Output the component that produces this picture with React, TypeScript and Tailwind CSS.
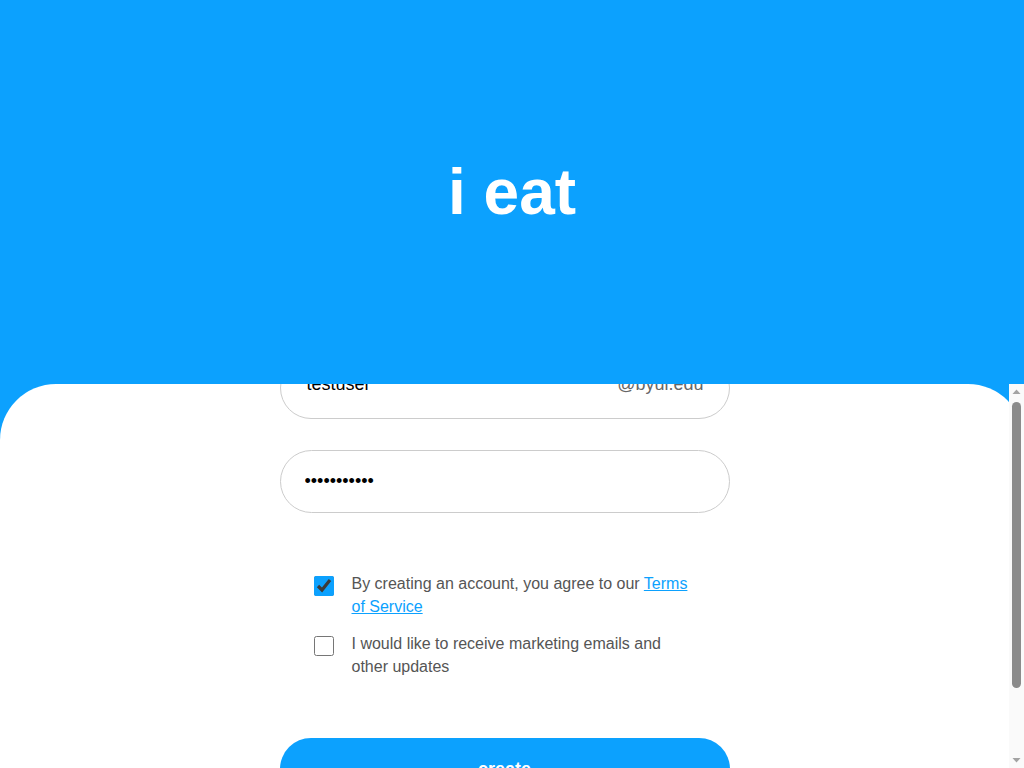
import React, { useEffect, useRef } from "react"

const BLUE = "#0ca1fe"

function ScrollStrip() {
	return (
		<div className="flex w-[15px] shrink-0 flex-col items-center bg-[#fafafa]">
			<svg width="15" height="15" viewBox="0 0 15 15">
				<path d="M3.5 10 L7.5 5.5 L11.5 10 Z" fill="#a3a3a3" />
			</svg>
			<div className="mt-[3px] h-[286px] w-[9px] rounded-full bg-[#8b8b8b]" />
			<div className="flex-1" />
			<svg width="15" height="15" viewBox="0 0 15 15">
				<path d="M3.5 5 L7.5 9.5 L11.5 5 Z" fill="#a3a3a3" />
			</svg>
		</div>
	)
}

export default function App() {
	const scrollRef = useRef<HTMLDivElement | null>(null)

	useEffect(() => {
		if (scrollRef.current) scrollRef.current.scrollTop = 4
	}, [])

	return (
		<div className="flex h-screen flex-col bg-[#0ca1fe] font-['Liberation_Sans',Arial,sans-serif]">
			<header className="flex h-[384px] shrink-0 items-center justify-center">
				<h1 className="text-[64px] font-bold leading-none text-white">i eat</h1>
			</header>

			<div className="flex min-h-0 flex-1 rounded-t-[56px] bg-white">
				<div ref={scrollRef} className="h-full min-w-0 flex-1 overflow-y-auto [scrollbar-width:none]">
					<form className="mx-auto -mt-[23px] flex w-[450px] flex-col pb-[55px]" onSubmit={(e) => e.preventDefault()}>
						<div className="flex h-[62px] items-center rounded-full border border-[#cccccc] pb-[8px] pl-[26px] pr-[25px]">
							<input
								type="text"
								defaultValue="testuser"
								className="min-w-0 flex-1 bg-transparent text-[18px] text-black outline-none"
							/>
							<span className="text-[18px] text-[#666666]">@byui.edu</span>
						</div>

						<div className="mt-[31px] flex h-[63px] items-center rounded-full border border-[#cccccc] px-[24px]">
							<input
								type="password"
								defaultValue="password123"
								className="w-full bg-transparent text-[18px] text-black outline-none"
							/>
						</div>

						<div className="mt-[59px] flex flex-col gap-[14px] px-[34px] text-[16px] leading-[23px] text-[#555555]">
							<label className="flex items-start gap-[18px]">
								<input type="checkbox" defaultChecked className="mt-[4px] h-5 w-5 shrink-0 accent-[#0ca1fe]" />
								<span>
									By creating an account, you agree to our{" "}
									<a href="#" className="text-[#0ca1fe] underline">Terms of Service</a>
								</span>
							</label>
							<label className="flex items-start gap-[18px]">
								<input type="checkbox" className="mt-[4px] h-5 w-5 shrink-0 accent-[#0ca1fe]" />
								<span>I would like to receive marketing emails and other updates</span>
							</label>
						</div>

						<button
							type="submit"
							className="mt-[60px] h-[62px] rounded-full text-[18px] font-bold text-white"
							style={{ backgroundColor: BLUE }}
						>
							create
						</button>
					</form>
				</div>
				<ScrollStrip />
			</div>
		</div>
	)
}
